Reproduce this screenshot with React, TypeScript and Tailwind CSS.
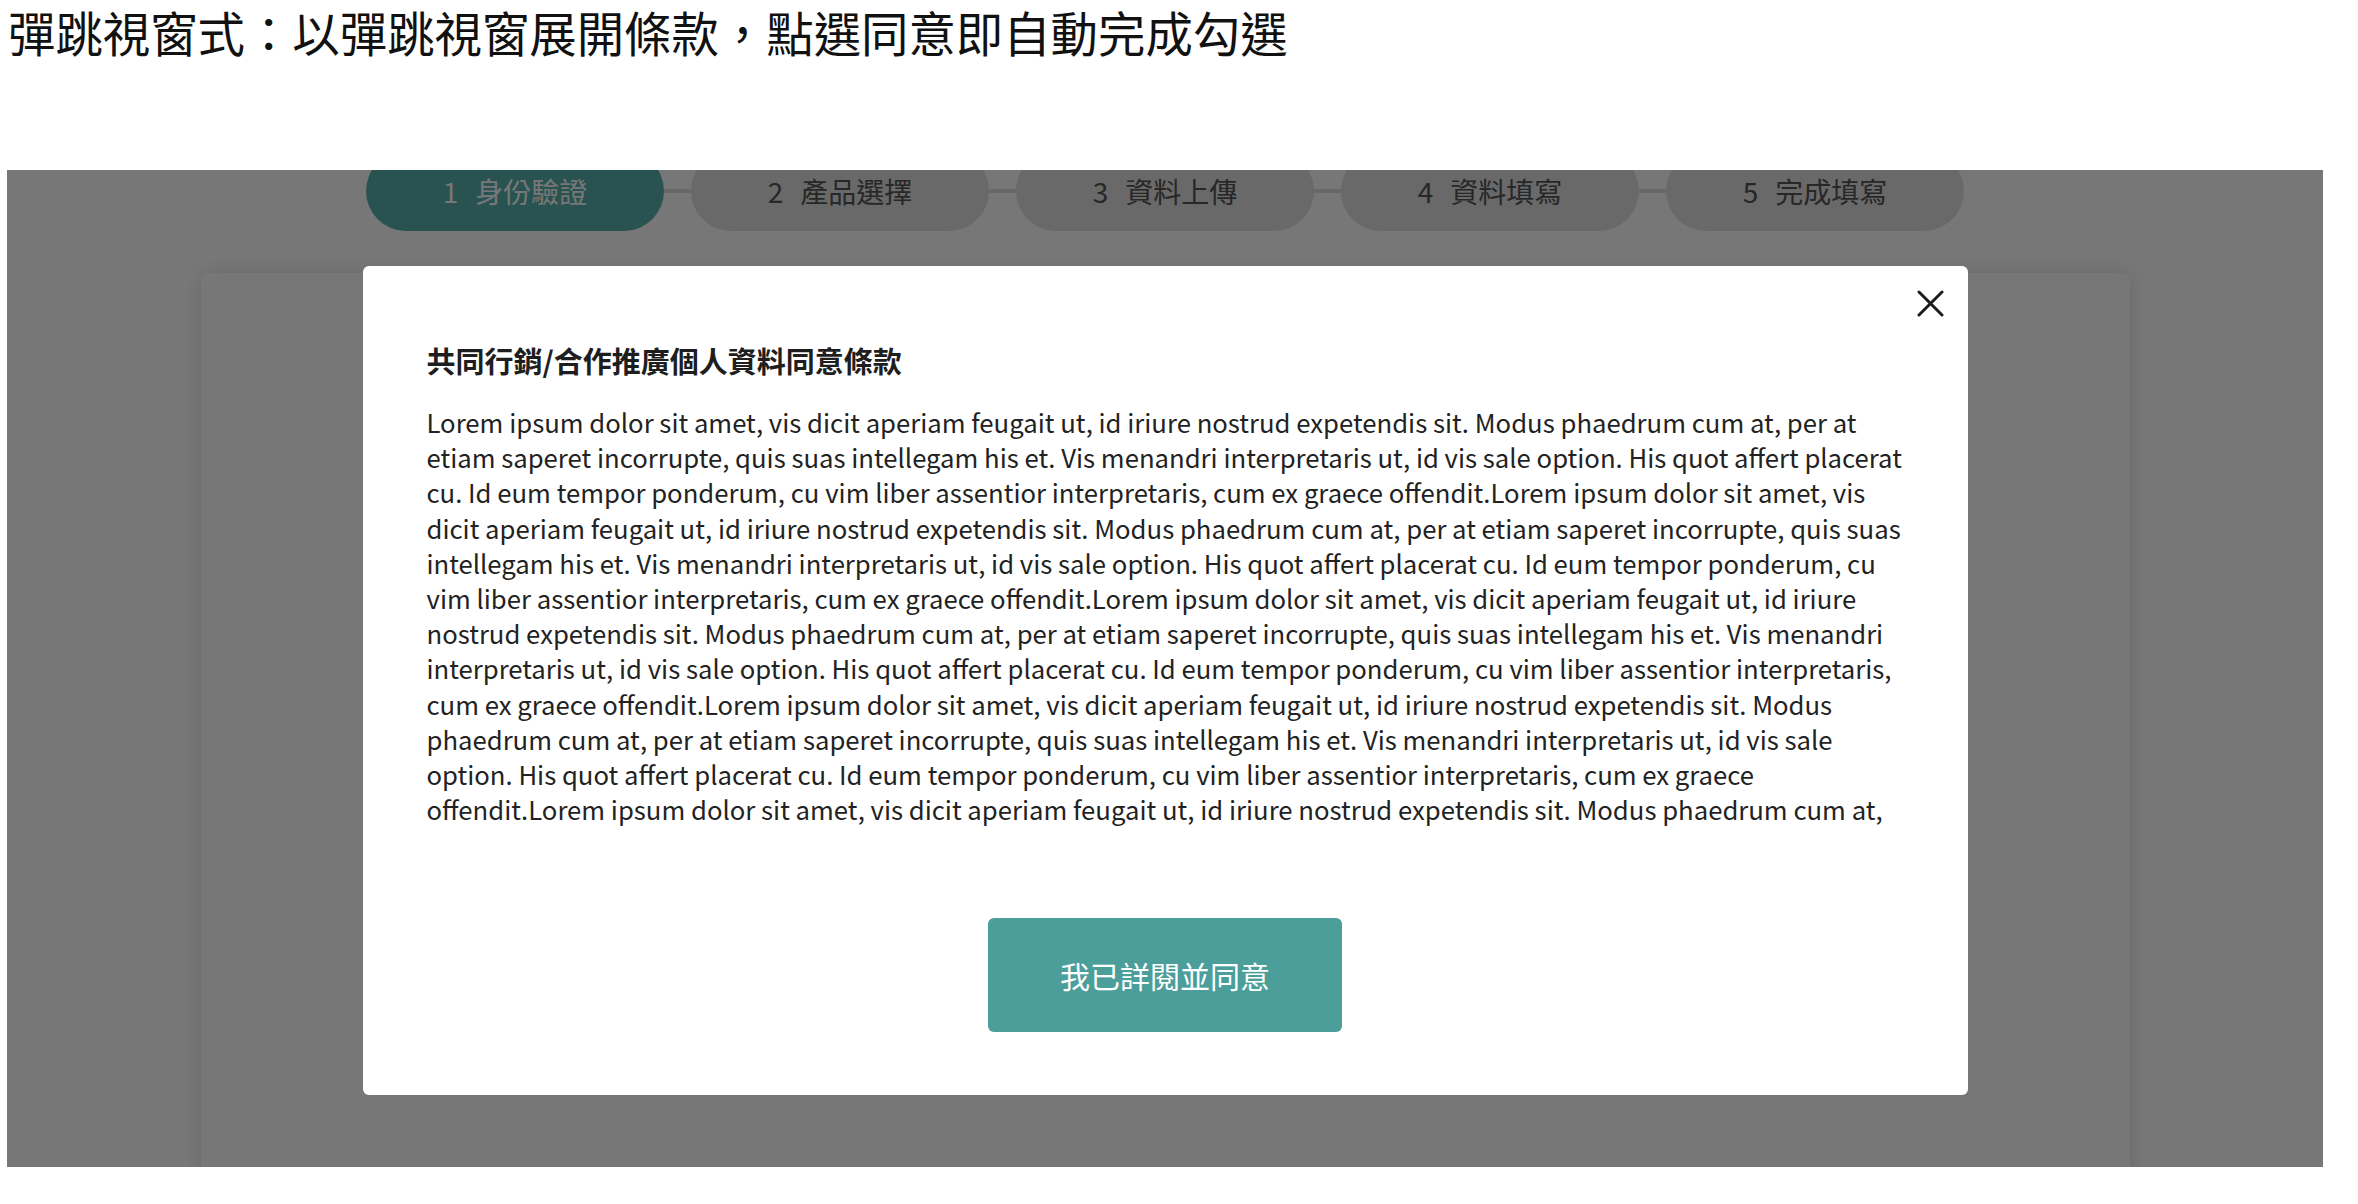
const lorem =
  "Lorem ipsum dolor sit amet, vis dicit aperiam feugait ut, id iriure nostrud expetendis sit. Modus phaedrum cum at, per at etiam saperet incorrupte, quis suas intellegam his et. Vis menandri interpretaris ut, id vis sale option. His quot affert placerat cu. Id eum tempor ponderum, cu vim liber assentior interpretaris, cum ex graece offendit.";

const steps = [
  ["1", "身份驗證"],
  ["2", "產品選擇"],
  ["3", "資料上傳"],
  ["4", "資料填寫"],
  ["5", "完成填寫"],
];

export default function App() {
  return (
    <div className="min-h-screen bg-white font-['Noto_Sans_CJK_TC',sans-serif]">
      <h1 className="pl-[8px] pt-[8px] text-[47.4px] leading-[48px] font-normal text-[#111]">
        彈跳視窗式：以彈跳視窗展開條款，點選同意即自動完成勾選
      </h1>

      {/* preview box */}
      <div className="relative ml-[7px] mt-[114px] h-[997px] w-[2316px] overflow-hidden bg-white">
        {/* stepper */}
        <div className="-mt-[19px] flex items-center justify-center">
          {steps.map(([n, label], i) => (
            <div key={n} className="flex items-center">
              {i > 0 && <div className="h-[4px] w-[27px] bg-[#dedede]" />}
              <div
                className={
                  i === 0
                    ? "flex h-[80px] w-[298px] items-center justify-center gap-[17px] rounded-full bg-[#56b2ab] text-[28px] text-white"
                    : "flex h-[80px] w-[298px] items-center justify-center gap-[17px] rounded-full bg-[#e0e0e0] text-[28px] text-[#555]"
                }
              >
                <span>{n}</span>
                <span>{label}</span>
              </div>
            </div>
          ))}
        </div>

        {/* page card */}
        <div className="mx-auto mt-[42px] h-[1000px] w-[1929px] rounded-[8px] bg-white shadow-[0_0_20px_rgba(0,0,0,0.12)]" />

        {/* overlay */}
        <div className="absolute inset-0 bg-black/[0.533]">
          <div className="relative mx-auto mt-[96px] w-[1605px] rounded-[6px] bg-white px-[64px] pt-[74px] pb-[63px]">
            <button className="absolute right-[24px] top-[24px] h-[27px] w-[27px]">
              <svg width="27" height="27" viewBox="0 0 27 27" fill="none">
                <path d="M2 2L25 25M25 2L2 25" stroke="#1c1c1c" strokeWidth="3" strokeLinecap="round" />
              </svg>
            </button>

            <h2 className="text-[29px] leading-[40px] font-bold text-[#1e1e1e]">
              共同行銷/合作推廣個人資料同意條款
            </h2>

            <p className="-mr-[6px] mt-[24px] h-[423px] text-[25.7px] leading-[35.2px] text-[#222]">
              {lorem + lorem + lorem + lorem +
                "Lorem ipsum dolor sit amet, vis dicit aperiam feugait ut, id iriure nostrud expetendis sit. Modus phaedrum cum at,"}
            </p>

            <div className="mt-[91px] flex justify-center">
              <button className="h-[114px] w-[354px] rounded-[6px] bg-[#4b9e99] text-[30px] text-white">
                我已詳閱並同意
              </button>
            </div>
          </div>
        </div>
      </div>
    </div>
  );
}
